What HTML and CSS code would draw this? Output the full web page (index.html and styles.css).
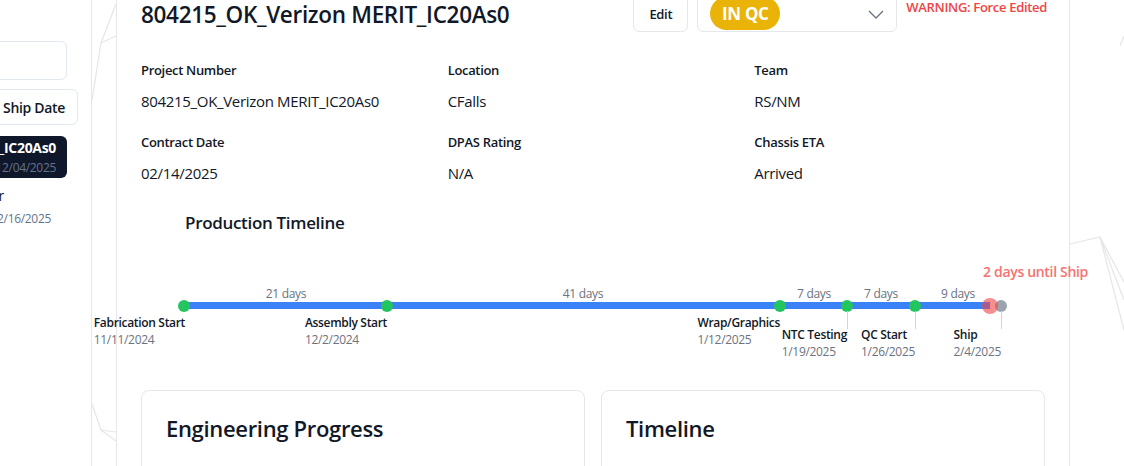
FILE: index.html
```html
<!DOCTYPE html>
<html lang="en">
<head>
<meta charset="utf-8">
<title>804215_OK_Verizon MERIT_IC20As0</title>
<link rel="stylesheet" href="styles.css">
</head>
<body>
<div class="app">
  <svg class="backdrop" width="1124" height="466" viewBox="0 0 1124 466" aria-hidden="true">
    <g fill="none" stroke="#e6e6e6" stroke-width="1.2">
      <polyline points="116,4 101,43 92,100"/>
      <line x1="101" y1="43" x2="116" y2="36"/>
      <polyline points="92,404 101,430 116,432"/>
      <line x1="101" y1="430" x2="116" y2="441"/>
      <polyline points="1070,244 1100,237 1124,282"/>
      <line x1="1100" y1="237" x2="1124" y2="300"/>
      <line x1="1100" y1="237" x2="1124" y2="330"/>
      <line x1="1124" y1="36" x2="1120" y2="46"/>
    </g>
  </svg>

  <aside class="sidebar">
    <div class="side-inner">
      <div class="side-search"></div>
      <div class="side-sort"><button class="sort-btn">Ship Date</button></div>
      <div class="side-item active">
        <div class="si-line si-title">804215_OK_Verizon MERIT_IC20As0</div>
        <div class="si-line si-date">12/04/2025</div>
      </div>
      <div class="side-item second">
        <div class="si-line si-title si-title2">804216_TX_Verizon Tower</div>
        <div class="si-line si-date si-date2">12/16/2025</div>
      </div>
    </div>
  </aside>

  <main class="main">
    <section class="card">
      <header class="head">
        <h1 class="title">804215_OK_Verizon MERIT_IC20As0</h1>
        <div class="head-actions">
          <button class="edit-btn">Edit</button>
          <div class="status-select">
            <span class="pill">IN QC</span>
            <svg class="chev" width="16" height="9" viewBox="0 0 16 9"><polyline points="1,1 8,8 15,1" fill="none" stroke="#6b7280" stroke-width="1.3"/></svg>
          </div>
          <div class="warning">WARNING: Force Edited</div>
        </div>
      </header>

      <div class="info">
        <div class="field"><div class="lbl">Project Number</div><div class="val">804215_OK_Verizon MERIT_IC20As0</div></div>
        <div class="field"><div class="lbl">Location</div><div class="val">CFalls</div></div>
        <div class="field"><div class="lbl">Team</div><div class="val">RS/NM</div></div>
        <div class="field"><div class="lbl">Contract Date</div><div class="val">02/14/2025</div></div>
        <div class="field"><div class="lbl">DPAS Rating</div><div class="val">N/A</div></div>
        <div class="field"><div class="lbl">Chassis ETA</div><div class="val">Arrived</div></div>
      </div>

      <h2 class="pt-title">Production Timeline</h2>

      <div class="timeline">
        <div class="until">2 days until Ship</div>
        <div class="track"></div>

        <span class="span-lbl" style="left:145px">21 days</span>
        <span class="span-lbl" style="left:442px">41 days</span>
        <span class="span-lbl" style="left:673px">7 days</span>
        <span class="span-lbl" style="left:740px">7 days</span>
        <span class="span-lbl" style="left:817px">9 days</span>

        <span class="dot" style="left:43px"></span>
        <span class="dot" style="left:246px"></span>
        <span class="dot" style="left:639px"></span>
        <span class="dot" style="left:706px"></span>
        <span class="dot" style="left:774px"></span>
        <span class="dot now" style="left:849px"></span>
        <span class="dot ship" style="left:860px"></span>

        <span class="tick" style="left:706px"></span>
        <span class="tick" style="left:774px"></span>
        <span class="tick" style="left:860px"></span>

        <div class="ms" style="left:44px"><div class="ms-name">Fabrication Start</div><div class="ms-date">11/11/2024</div></div>
        <div class="ms" style="left:246px"><div class="ms-name">Assembly Start</div><div class="ms-date">12/2/2024</div></div>
        <div class="ms" style="left:639px"><div class="ms-name">Wrap/Graphics</div><div class="ms-date">1/12/2025</div></div>
        <div class="ms low" style="left:706px"><div class="ms-name">NTC Testing</div><div class="ms-date">1/19/2025</div></div>
        <div class="ms low" style="left:774px"><div class="ms-name">QC Start</div><div class="ms-date">1/26/2025</div></div>
        <div class="ms low" style="left:860px"><div class="ms-name">Ship</div><div class="ms-date">2/4/2025</div></div>
      </div>

      <div class="panels">
        <div class="panel"><h3 class="panel-title">Engineering Progress</h3></div>
        <div class="panel"><h3 class="panel-title">Timeline</h3></div>
      </div>
    </section>
  </main>
</div>
</body>
</html>
```
FILE: styles.css
```css
* { box-sizing: border-box; }
html, body { margin: 0; padding: 0; }
body {
  width: 1124px;
  height: 466px;
  overflow: hidden;
  background: #fff;
  font-family: "Open Sans", "Noto Sans", sans-serif;
  color: #111827;
  letter-spacing: -0.02em;
}
button { font-family: inherit; letter-spacing: inherit; }
.app { position: relative; display: flex; height: 466px; }
.backdrop { position: absolute; left: 0; top: 0; z-index: 0; }

/* sidebar */
.sidebar {
  position: relative; z-index: 1;
  flex: 0 0 92px;
  height: 466px;
  border-right: 1px solid #e5e7eb;
  background: #fff;
  overflow: hidden;
}
.side-inner { width: 300px; margin-left: -209px; display: flex; flex-direction: column; align-items: flex-end; }
.side-search {
  margin-top: 41px; margin-right: 24px;
  width: 260px; height: 39px;
  border: 1px solid #e2e8f0; border-radius: 6px;
}
.side-sort { margin-top: 9px; margin-right: 13px; }
.sort-btn {
  height: 36px; width: 120px;
  border: 1px solid #e2e8f0; border-radius: 6px; background: #fff;
  font-size: 14px; font-weight: 600; color: #111827;
  display: flex; align-items: center; justify-content: flex-end; padding: 0 12px;
}
.side-item { width: 90px; margin-right: 24px; margin-top: 11px; border-radius: 6px; padding: 2px 11px 2px 12px; }
.side-item.active { background: #0f172a; }
.si-line { display: flex; justify-content: flex-end; white-space: nowrap; }
.si-title { font-size: 14px; font-weight: 700; line-height: 20px; color: #fff; }
.si-date { font-size: 12px; line-height: 16px; color: #64748b; margin-top: 2px; }
.side-item.second { margin-top: 6px; }
.si-title2 { color: #111827; font-weight: 400; padding-right: 52px; }
.si-date2 { padding-right: 5px; margin-top: 5px; }

/* main card */
.main { position: relative; z-index: 1; padding-left: 24px; }
.card {
  width: 954px;
  margin-top: -9px;
  background: #fff;
  border-left: 1px solid #e5e7eb;
  border-right: 1px solid #e5e7eb;
  padding: 0 24px 0 24px;
  min-height: 500px;
}
.head { display: flex; align-items: flex-start; height: 41px; }
.title { margin: 9px 0 0 0; font-size: 22.5px; line-height: 30px; font-weight: 600; }
.head-actions { margin-left: auto; margin-right: -2px; display: flex; align-items: flex-start; gap: 9px; }
.edit-btn {
  width: 55px; height: 41px; padding: 4px 0 0 0;
  border: 1px solid #e5e7eb; border-radius: 6px; background: #fff;
  font-size: 13px; font-weight: 600; color: #111827;
}
.status-select {
  width: 200px; height: 41px;
  border: 1px solid #e5e7eb; border-radius: 6px;
  display: flex; align-items: flex-end; padding: 0 12px 1px 12px;
}
.pill {
  width: 70px; height: 33px; border-radius: 17px;
  background: #eab308; color: #fff;
  font-size: 17px; font-weight: 700;
  display: flex; align-items: center; justify-content: center;
}
.chev { margin-left: auto; align-self: flex-start; margin-top: 18px; }
.warning { margin-top: 7px; font-size: 13px; line-height: 18px; font-weight: 600; color: #ef4444; white-space: nowrap; }

.info {
  display: grid; grid-template-columns: repeat(3, 1fr);
  column-gap: 16px; row-gap: 20px;
  margin-top: 28px;
}
.lbl { font-size: 13px; line-height: 20px; font-weight: 600; }
.val { font-size: 15px; line-height: 22px; margin-top: 10px; }

.pt-title { margin: 27px 0 0 44px; font-size: 17px; line-height: 24px; font-weight: 600; }

.timeline { position: relative; height: 130px; margin-top: 0; }
.track { position: absolute; left: 43px; top: 67px; width: 806px; height: 7px; background: #3b82f6; }
.span-lbl { position: absolute; top: 51px; transform: translateX(-50%); font-size: 12px; line-height: 16px; color: #6b7280; white-space: nowrap; }
.dot { position: absolute; top: 64.5px; width: 12px; height: 12px; margin-left: -6px; border-radius: 50%; background: #22c55e; }
.dot.now { top: 62.5px; width: 16px; height: 16px; margin-left: -8px; background: rgba(239, 68, 68, 0.6); z-index: 2; }
.dot.ship { background: #9ca3af; }
.tick { position: absolute; top: 76px; width: 1px; height: 18px; background: #d1d5db; }
.ms { position: absolute; top: 80px; transform: translateX(-100%); white-space: nowrap; }
.ms.low { top: 92px; }
.ms-name { font-size: 12px; line-height: 16px; font-weight: 600; color: #111827; }
.ms-date { font-size: 12px; line-height: 17px; color: #6b7280; }
.until { position: absolute; left: 947px; top: 27px; transform: translateX(-100%); font-size: 14px; line-height: 20px; font-weight: 600; color: #f87171; white-space: nowrap; }

.panels { display: grid; grid-template-columns: 1fr 1fr; gap: 16px; margin-top: 25px; }
.panel { border: 1px solid #e5e7eb; border-radius: 8px; padding: 23px 24px 24px 24px; min-height: 200px; }
.panel-title { margin: 0; font-size: 22px; line-height: 28px; font-weight: 600; }
```
